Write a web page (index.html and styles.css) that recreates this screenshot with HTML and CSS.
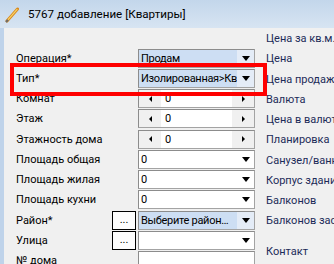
FILE: index.html
```html
<!DOCTYPE html>
<html lang="ru">
<head>
    <meta charset="UTF-8">
    <title>5767 добавление [Квартиры]</title>
    <link rel="stylesheet" href="styles.css">
</head>
<body>
    <div class="window">
        <div class="titlebar">
            <svg class="pencil" width="14" height="16" viewBox="0 0 14 16">
                <line x1="2" y1="14" x2="12.5" y2="2" stroke="#d98a1e" stroke-width="3" stroke-linecap="round"/>
                <line x1="2.5" y1="13.4" x2="12.3" y2="2.2" stroke="#f7d36a" stroke-width="1.2"/>
                <line x1="1" y1="15" x2="3" y2="12.8" stroke="#6b6b6b" stroke-width="2"/>
            </svg>
            <span class="title">5767 добавление [Квартиры]</span>
        </div>
        <div class="frame">
            <div class="content">
                <div class="form-left">
                    <div class="row">
                        <span class="label">Операция*</span><span></span>
                        <div class="box combo selected"><span class="val">Продам</span><span class="drop"><svg width="8" height="5" viewBox="0 0 8 5"><polygon points="0,0 8,0 4,5" fill="#000"/></svg></span></div>
                    </div>
                    <div class="row">
                        <span class="label">Тип*</span><span></span>
                        <div class="box combo selected"><span class="val">Изолированная&gt;Кв</span><span class="drop"><svg width="8" height="5" viewBox="0 0 8 5"><polygon points="0,0 8,0 4,5" fill="#000"/></svg></span></div>
                    </div>
                    <div class="row">
                        <span class="label">Комнат</span><span></span>
                        <div class="box spin"><span class="arrow"><svg width="3" height="6" viewBox="0 0 3 6"><polygon points="3,0 3,6 0,3" fill="#000"/></svg></span><span class="val">0</span><span class="arrow right"><svg width="3" height="6" viewBox="0 0 3 6"><polygon points="0,0 0,6 3,3" fill="#000"/></svg></span></div>
                    </div>
                    <div class="row">
                        <span class="label">Этаж</span><span></span>
                        <div class="box spin"><span class="arrow"><svg width="3" height="6" viewBox="0 0 3 6"><polygon points="3,0 3,6 0,3" fill="#000"/></svg></span><span class="val">0</span><span class="arrow right"><svg width="3" height="6" viewBox="0 0 3 6"><polygon points="0,0 0,6 3,3" fill="#000"/></svg></span></div>
                    </div>
                    <div class="row">
                        <span class="label">Этажность дома</span><span></span>
                        <div class="box spin"><span class="arrow"><svg width="3" height="6" viewBox="0 0 3 6"><polygon points="3,0 3,6 0,3" fill="#000"/></svg></span><span class="val">0</span><span class="arrow right"><svg width="3" height="6" viewBox="0 0 3 6"><polygon points="0,0 0,6 3,3" fill="#000"/></svg></span></div>
                    </div>
                    <div class="row">
                        <span class="label">Площадь общая</span><span></span>
                        <div class="box combo"><span class="val">0</span><span class="drop"><svg width="8" height="5" viewBox="0 0 8 5"><polygon points="0,0 8,0 4,5" fill="#000"/></svg></span></div>
                    </div>
                    <div class="row">
                        <span class="label">Площадь жилая</span><span></span>
                        <div class="box combo"><span class="val">0</span><span class="drop"><svg width="8" height="5" viewBox="0 0 8 5"><polygon points="0,0 8,0 4,5" fill="#000"/></svg></span></div>
                    </div>
                    <div class="row">
                        <span class="label">Площадь кухни</span><span></span>
                        <div class="box combo"><span class="val">0</span><span class="drop"><svg width="8" height="5" viewBox="0 0 8 5"><polygon points="0,0 8,0 4,5" fill="#000"/></svg></span></div>
                    </div>
                    <div class="row">
                        <span class="label">Район*</span><button class="dots">...</button>
                        <div class="box combo selected"><span class="val">Выберите район…</span><span class="drop"><svg width="8" height="5" viewBox="0 0 8 5"><polygon points="0,0 8,0 4,5" fill="#000"/></svg></span></div>
                    </div>
                    <div class="row">
                        <span class="label">Улица</span><button class="dots">...</button>
                        <div class="box combo"><span class="val"></span><span class="drop"><svg width="8" height="5" viewBox="0 0 8 5"><polygon points="0,0 8,0 4,5" fill="#000"/></svg></span></div>
                    </div>
                    <div class="row">
                        <span class="label">№ дома</span><span></span>
                        <div class="box"><span class="val"></span></div>
                    </div>
                </div>
                <div class="form-right">
                    <div class="rlabel">Цена за кв.м.</div>
                    <div class="rlabel">Цена</div>
                    <div class="rlabel">Цена продажи</div>
                    <div class="rlabel">Валюта</div>
                    <div class="rlabel">Цена в валюте</div>
                    <div class="rlabel">Планировка</div>
                    <div class="rlabel">Санузел/ванная</div>
                    <div class="rlabel">Корпус здания</div>
                    <div class="rlabel">Балконов</div>
                    <div class="rlabel">Балконов застеклено</div>
                    <div class="rlabel contact">Контакт</div>
                </div>
            </div>
        </div>
        <div class="highlight"></div>
    </div>
</body>
</html>
```

FILE: styles.css
```css
body {
    margin: 0;
    font-family: Roboto, "Noto Sans", sans-serif;
    font-size: 11px;
    color: #000;
}

.window {
    position: relative;
    width: 334px;
    height: 264px;
    overflow: hidden;
    background: #f0f0f0;
}

.titlebar {
    height: 28px;
    display: flex;
    align-items: center;
    padding-left: 5px;
    background: linear-gradient(#c3d6eb, #d7e4f2);
}

.pencil {
    margin-top: 2px;
}

.title {
    margin-left: 9px;
    font-size: 11.6px;
    white-space: nowrap;
}

.frame {
    height: 236px;
    border-left: 4px solid #bfd3ea;
    background: #f0f0f0;
}

.content {
    display: flex;
    padding: 1px 0 0 12px;
}

.form-left {
    padding-top: 19px;
}

.row {
    display: grid;
    grid-template-columns: 96px 26px 117px;
    height: 20.25px;
    align-items: center;
}

.label {
    white-space: nowrap;
}

.box {
    height: 19px;
    box-sizing: border-box;
    display: flex;
    align-items: center;
    background: #fff;
    border: 1px solid #a3a3a3;
    border-top-color: #8c8c8c;
    border-left-color: #8c8c8c;
    overflow: hidden;
}

.val {
    flex: 1;
    padding-left: 2px;
    letter-spacing: -0.3px;
    white-space: nowrap;
    overflow: hidden;
}

.combo.selected {
    background: #cddef3;
}

.drop {
    width: 17px;
    height: 17px;
    flex: none;
    display: flex;
    align-items: center;
    justify-content: center;
    background: #fff;
}

.combo.selected .drop {
    background: #e4ecf7;
}

.spin .arrow {
    width: 22px;
    height: 17px;
    display: flex;
    align-items: center;
    justify-content: center;
    background: #f0f0f0;
}

.spin .val {
    padding-left: 4px;
}

.dots {
    width: 24px;
    height: 19px;
    padding: 0;
    border: 1px solid #000;
    background: #fdfdfd;
    font-family: Roboto, "Noto Sans", sans-serif;
    font-size: 11px;
    line-height: 14px;
    color: #000;
}

.form-right {
    margin-left: 11px;
}

.rlabel {
    height: 20.25px;
    line-height: 20px;
    white-space: nowrap;
    color: #1c2b58;
}

.rlabel.contact {
    margin-top: 10px;
}

.highlight {
    position: absolute;
    left: 10px;
    top: 63px;
    width: 257px;
    height: 33px;
    box-sizing: border-box;
    border: 4px solid #ff0000;
}
```
